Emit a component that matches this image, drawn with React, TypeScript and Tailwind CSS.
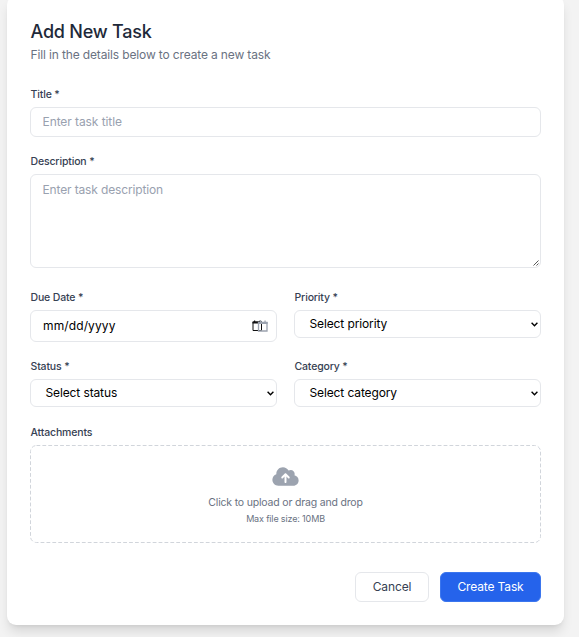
import type { ReactNode } from "react";

function Label({ children }: { children: ReactNode }) {
  return <div className="h-[15px] pl-[0.5px] text-[10.5px] leading-[15px] font-medium tracking-[-0.15px] text-gray-700">{children}</div>;
}

function SelectBox({ label, value }: { label: string; value: string }) {
  return (
    <div>
      <Label>{label}</Label>
      <button type="button" className="mt-[5px] flex h-[28px] w-full items-center justify-between rounded-md border border-gray-200 bg-white pr-[2px] pl-[14.5px] text-[12px] leading-4 tracking-[-0.12px] text-black">
        <span>{value}</span>
        <svg className="h-[5px] w-[7px]" viewBox="0 0 7 5" fill="none" stroke="#000" strokeWidth="1.4">
          <path d="M0.6 0.8 3.5 3.7 6.4 0.8" />
        </svg>
      </button>
    </div>
  );
}

function DateIcons() {
  return (
    <svg className="h-3 w-4" viewBox="0 0 16 12" fill="none">
      <path d="M1 2h8.5v8.5H1z" stroke="#111" />
      <path d="M0.5 1.5H10v2H.5zM2 .5h1.2V2H2zM7.5.5h1.2V2H7.5z" fill="#111" />
      <path d="M6.5 2.5h8.5v8.5H6.5z" stroke="#9ca3af" strokeWidth="1.3" />
      <path d="M6 2h9.6v2H6zM8 .5h1.3V2H8zM12.4.5h1.3V2h-1.3z" fill="#9ca3af" />
    </svg>
  );
}

export default function App() {
  return (
    <div className="h-[637px] overflow-hidden bg-[#f3f3f3] pl-[7px] font-['Inter','Liberation_Sans',sans-serif]">
      <main className="-mt-1 h-[629px] w-[557px] rounded-[9px] bg-white px-[23px] pt-[24px] shadow-[0_8px_12px_-2px_rgba(0,0,0,0.12),0_3px_5px_-3px_rgba(0,0,0,0.1)]">
        <h1 className="h-6 pl-[0.5px] text-[18px] leading-6 font-[550] tracking-[-0.22px] text-gray-800">Add New Task</h1>
        <p className="mt-[3px] h-4 pl-[0.5px] text-[12px] leading-4 tracking-[-0.14px] text-gray-500">Fill in the details below to create a new task</p>

        <form className="mt-6">
          <Label>Title *</Label>
          <input className="mt-[5px] block h-[30px] w-[511px] rounded-md border border-gray-200 px-[11.5px] pb-[2px] text-[12px] leading-4 tracking-[-0.08px] placeholder:text-gray-400" placeholder="Enter task title" />

          <div className="mt-[17px]">
            <Label>Description *</Label>
            <div className="relative mt-[5px] w-[511px]">
              <textarea className="block h-[94px] w-full resize-none rounded-md border border-gray-200 px-[11.5px] py-[7px] text-[12px] leading-4 tracking-[-0.14px] placeholder:text-gray-400" placeholder="Enter task description" />
              <svg className="absolute right-[2px] bottom-[2px] h-[6px] w-[6px]" viewBox="0 0 6 6" stroke="#444" strokeWidth=".9">
                <path d="M.5 5.5 5.5.5M3.5 5.5l2-2" />
              </svg>
            </div>
          </div>

          <div className="mt-[22px] grid w-[511px] grid-cols-2 gap-x-[17px]">
            <div className="h-[69px]">
              <Label>Due Date *</Label>
              <div className="mt-[5px] flex h-8 items-center justify-between rounded-md border border-gray-200 pr-[8px] pl-[12px] text-[12px] leading-4 tracking-[0.12px] text-black">
                <span>mm/dd/yyyy</span>
                <DateIcons />
              </div>
            </div>
            <SelectBox label="Priority *" value="Select priority" />
            <SelectBox label="Status *" value="Select status" />
            <SelectBox label="Category *" value="Select category" />
          </div>

          <div className="mt-[18px]">
            <Label>Attachments</Label>
            <div className="relative mt-[5px] flex h-[98px] w-[511px] flex-col items-center pt-[21px]">
              <svg className="absolute inset-0 h-full w-full" viewBox="0 0 511 98" fill="none">
                <rect x=".5" y=".5" width="510" height="97" rx="6" stroke="#d1d5db" strokeDasharray="3.8 2.1" />
              </svg>
              <svg className="h-[21px] w-[27px]" viewBox="0 0 640 512" fill="#9ca3af">
                <path d="M144 480C64.500 480 0 415.500 0 336c0-62.800 40.200-116.200 96.200-135.900c-.1-2.700-.2-5.400-.2-8.100c0-88.400 71.600-160 160-160c59.300 0 111 32.200 138.700 80.200C409.900 102 428.300 96 448 96c53 0 96 43 96 96c0 12.200-2.300 23.800-6.400 34.600C596 238.400 640 290.100 640 352c0 70.700-57.300 128-128 128H144zm79-217c-9.400 9.400-9.400 24.600 0 33.900s24.600 9.400 33.900 0l39-39V392c0 13.300 10.700 24 24 24s24-10.700 24-24V257.900l39 39c9.400 9.400 24.600 9.400 33.900 0s9.400-24.600 0-33.900l-80-80c-9.400-9.400-24.600-9.400-33.900 0l-80 80z" />
              </svg>
              <p className="mt-[9px] text-[10.5px] leading-[14px] tracking-[-0.18px] text-gray-500">Click to upload or drag and drop</p>
              <p className="mt-[3px] text-[9px] leading-[12px] tracking-[-0.15px] text-gray-500">Max file size: 10MB</p>
            </div>
          </div>

          <div className="mt-[29px] flex w-[511px] justify-end gap-[11px]">
            <button type="button" className="h-[30px] w-[74px] rounded-md border border-gray-200 text-[12px] leading-4 tracking-[-0.12px] text-gray-700">Cancel</button>
            <button type="button" className="h-[30px] w-[101px] rounded-md border border-[#3b76ee] bg-[#2563eb] text-[12px] leading-4 tracking-[-0.14px] text-white">Create Task</button>
          </div>
        </form>
      </main>
    </div>
  );
}
